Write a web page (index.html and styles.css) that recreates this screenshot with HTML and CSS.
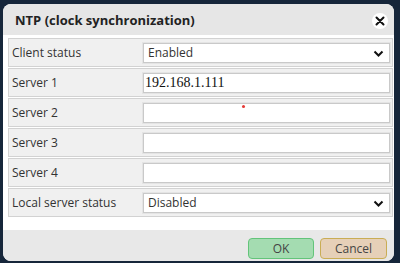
FILE: index.html
```html
<!DOCTYPE html>
<html>
<head>
<meta charset="utf-8">
<link rel="stylesheet" href="styles.css">
</head>
<body>
<div class="dialog">
  <div class="titlebar">
    <span class="title">NTP (clock synchronization)</span>
    <span class="close"><svg width="10" height="10" viewBox="0 0 10 10"><path d="M1.5 1.5L8.5 8.5M8.5 1.5L1.5 8.5" stroke="#111" stroke-width="2" stroke-linecap="round"/></svg></span>
  </div>
  <div class="content">
    <div class="row">
      <label class="label">Client status</label>
      <div class="field select"><span class="val">Enabled</span><svg class="chev" width="11" height="7" viewBox="0 0 11 7"><path d="M1.5 1.5L5.5 5.5L9.5 1.5" fill="none" stroke="#111" stroke-width="2"/></svg></div>
    </div>
    <div class="row">
      <label class="label">Server 1</label>
      <div class="field text"><span class="ip">192.168.1.111</span></div>
    </div>
    <div class="row">
      <label class="label">Server 2</label>
      <div class="field text"><span class="req"></span></div>
    </div>
    <div class="row">
      <label class="label">Server 3</label>
      <div class="field text"></div>
    </div>
    <div class="row">
      <label class="label">Server 4</label>
      <div class="field text"></div>
    </div>
    <div class="row">
      <label class="label">Local server status</label>
      <div class="field select"><span class="val">Disabled</span><svg class="chev" width="11" height="7" viewBox="0 0 11 7"><path d="M1.5 1.5L5.5 5.5L9.5 1.5" fill="none" stroke="#111" stroke-width="2"/></svg></div>
    </div>
  </div>
  <div class="footer">
    <button class="btn ok">OK</button>
    <button class="btn cancel">Cancel</button>
  </div>
</div>
</body>
</html>
```
FILE: styles.css
```css
html, body {
  margin: 0;
  padding: 0;
}
body {
  background: #16263a;
  width: 400px;
  height: 263px;
  overflow: hidden;
  font-family: "Open Sans", "Noto Sans", sans-serif;
  color: #333;
}
.dialog {
  width: 391px;
  height: 257px;
  margin: 4px 0 0 3px;
  background: #fff;
  border-radius: 8px;
  overflow: hidden;
  display: flex;
  flex-direction: column;
}
.titlebar {
  height: 31px;
  background: #e6e6e6;
  display: flex;
  align-items: center;
  justify-content: space-between;
  padding: 0 6px 0 12px;
  flex: none;
}
.title {
  font-weight: bold;
  font-size: 13px;
  color: #222;
  margin-top: 1px;
}
.close {
  width: 16px;
  height: 16px;
  border-radius: 50%;
  background: #fff;
  display: flex;
  align-items: center;
  justify-content: center;
  margin-top: 2px;
}
.content {
  flex: 1;
  padding: 3px 1px 0 5px;
  display: flex;
  flex-direction: column;
  gap: 1px;
}
.row {
  height: 27px;
  border: 1px solid #d2d2d2;
  background: #f0f0f0;
  display: flex;
  align-items: center;
}
.label {
  width: 130px;
  padding-left: 3px;
  font-size: 12px;
  color: #333;
  flex: none;
}
.field {
  position: relative;
  width: 245px;
  height: 18px;
  border: 1px solid #c9c9c9;
  box-shadow: 0 0 0 1px #e4e4e4;
  background: #fff;
  display: flex;
  align-items: center;
  margin-left: 1px;
}
.val {
  font-size: 12px;
  padding-left: 4px;
  color: #333;
}
.ip {
  font-family: "Liberation Serif", serif;
  font-size: 14px;
  padding-left: 1px;
  color: #111;
}
.chev {
  position: absolute;
  right: 5px;
  top: 6px;
}
.req {
  position: absolute;
  left: 98px;
  top: 1px;
  width: 3px;
  height: 3px;
  background: #e53935;
  border-radius: 50%;
}
.footer {
  height: 31px;
  background: #e8e8e8;
  display: flex;
  justify-content: flex-end;
  align-items: flex-end;
  gap: 6px;
  padding: 0 7px 2px 0;
  box-sizing: border-box;
  flex: none;
}
.btn {
  height: 21px;
  width: 66px;
  border-radius: 4px;
  font-family: "Open Sans", "Noto Sans", sans-serif;
  font-size: 12px;
  color: #444;
  padding: 0;
}
.ok {
  background: #a4dcb1;
  border: 1px solid #63c47a;
}
.cancel {
  width: 67px;
  background: #e6d0b8;
  border: 1px solid #c9ad55;
}
```
